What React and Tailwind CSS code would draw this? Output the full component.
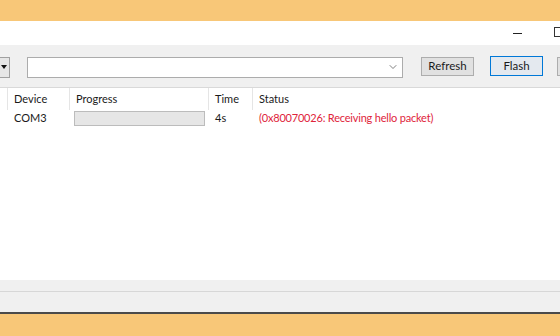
import { ChevronDown } from "lucide-react";

const font = { fontFamily: 'Lato, "Noto Sans", sans-serif' };

function HeaderCell({ w, children, last }) {
  return (
    <div
      className={`h-full shrink-0 flex items-center pl-[6px] ${last ? "" : "border-r border-[#e5e5e5]"} ${w}`}
    >
      {children}
    </div>
  );
}

export default function App() {
  return (
    <div
      className="w-[560px] h-[336px] overflow-hidden flex flex-col bg-[#f8c778] text-[11px] text-[#1a1a1a]"
      style={font}
    >
      <div className="h-[21px] shrink-0" />

      {/* title bar */}
      <div className="h-[24px] shrink-0 bg-white flex items-center justify-end">
        <div className="w-[9px] h-px bg-[#222] mr-[32px] mt-[1px]" />
        <div className="w-[10px] h-[10px] border border-[#333] mr-[-4px] mb-[2px]" />
      </div>

      {/* toolbar */}
      <div className="h-[43px] shrink-0 bg-[#f0f0f0] border-b border-[#d9d9d9] flex items-center">
        <div className="w-[10px] h-[21px] shrink-0 border border-l-0 border-[#a0a0a0] bg-[#e6e6e6] flex items-center justify-end pr-[2px] mt-[2px]">
          <div className="w-0 h-0 border-l-[3px] border-r-[3px] border-t-[4px] border-l-transparent border-r-transparent border-t-[#111]" />
        </div>
        <div className="ml-[17px] w-[376px] h-[21px] shrink-0 bg-white border border-[#acacac] flex items-center justify-end pr-[3px] mt-[2px]">
          <ChevronDown className="w-[12px] h-[12px] text-[#555]" strokeWidth={1.5} />
        </div>
        <button className="ml-[18px] w-[53px] h-[19px] shrink-0 bg-[#e1e1e1] border border-[#adadad] text-[11.5px] leading-none">
          Refresh
        </button>
        <button className="ml-[16px] w-[53px] h-[20px] shrink-0 bg-[#e4e9ef] border border-[#0078d7] text-[11.5px] leading-none">
          Flash
        </button>
        <button className="ml-[14px] w-[30px] h-[19px] shrink-0 bg-[#e1e1e1] border border-[#adadad]" />
      </div>

      {/* list */}
      <div className="h-[192px] shrink-0 bg-white flex flex-col">
        <div className="h-[22px] flex items-center">
          <div className="w-[8px] h-full shrink-0 border-r border-[#e5e5e5]" />
          <HeaderCell w="w-[62px]">Device</HeaderCell>
          <HeaderCell w="w-[139px]">Progress</HeaderCell>
          <HeaderCell w="w-[44px]">Time</HeaderCell>
          <HeaderCell w="flex-1" last>
            Status
          </HeaderCell>
        </div>
        <div className="h-[16px] flex items-center">
          <div className="w-[14px] shrink-0" />
          <div className="w-[60px] shrink-0">COM3</div>
          <div className="w-[141px] h-[15px] shrink-0 flex items-center">
            <div className="w-[131px] h-[15px] bg-[#e6e6e6] border border-[#bcbcbc]" />
          </div>
          <div className="w-[44px] shrink-0">4s</div>
          <div className="text-[#e0243b] whitespace-nowrap tracking-[-0.2px]">(0x80070026: Receiving hello packet)</div>
        </div>
      </div>

      {/* status bar */}
      <div className="h-[12px] shrink-0 bg-[#f0f0f0] border-b border-[#d7d7d7]" />
      <div className="h-[20px] shrink-0 bg-[#f0f0f0]" />
      <div className="h-[2px] shrink-0 bg-[#4a4a4a]" />
    </div>
  );
}
